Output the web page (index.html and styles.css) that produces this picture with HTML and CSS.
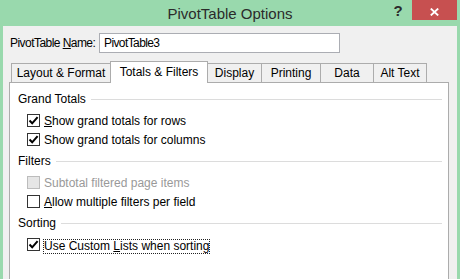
FILE: index.html
```html
<!DOCTYPE html>
<html>
<head>
<meta charset="utf-8">
<title>PivotTable Options</title>
<link rel="stylesheet" href="styles.css">
</head>
<body>
<div class="window">
  <div class="titlebar">
    <div class="spacer"></div>
    <div class="title">PivotTable Options</div>
    <div class="controls">
      <span class="help">?</span>
      <span class="close"><svg class="close-x" width="9" height="8" viewBox="0 0 9 8"><path d="M0.8 0.6 L8.2 7.4 M8.2 0.6 L0.8 7.4" stroke="#fff" stroke-width="1.9" fill="none"/></svg></span>
    </div>
  </div>
  <div class="content">
    <div class="name-row">
      <span class="name-label">PivotTable <u>N</u>ame:</span>
      <div class="name-input">PivotTable3</div>
    </div>
    <div class="tabs">
      <div class="tab tab-layout">Layout &amp; Format</div>
      <div class="tab tab-totals active">Totals &amp; Filters</div>
      <div class="tab tab-display">Display</div>
      <div class="tab tab-printing">Printing</div>
      <div class="tab tab-data">Data</div>
      <div class="tab tab-alt">Alt Text</div>
    </div>
    <div class="panel">
      <div class="group">
        <div class="group-head"><span class="group-title">Grand Totals</span><span class="rule"></span></div>
        <div class="check-row">
          <span class="box"><svg width="11" height="11" viewBox="0 0 11 11"><path d="M1.5 5.5 L4.2 8.3 L9.6 2.2" stroke="#000" stroke-width="2" fill="none"/></svg></span>
          <span class="lbl"><u>S</u>how grand totals for rows</span>
        </div>
        <div class="check-row">
          <span class="box"><svg width="11" height="11" viewBox="0 0 11 11"><path d="M1.5 5.5 L4.2 8.3 L9.6 2.2" stroke="#000" stroke-width="2" fill="none"/></svg></span>
          <span class="lbl">Show <u>g</u>rand totals for columns</span>
        </div>
      </div>
      <div class="group">
        <div class="group-head"><span class="group-title">Filters</span><span class="rule"></span></div>
        <div class="check-row disabled">
          <span class="box"></span>
          <span class="lbl">Subtotal filtered page items</span>
        </div>
        <div class="check-row">
          <span class="box"></span>
          <span class="lbl"><u>A</u>llow multiple filters per field</span>
        </div>
      </div>
      <div class="group">
        <div class="group-head"><span class="group-title">Sorting</span><span class="rule"></span></div>
        <div class="check-row">
          <span class="box"><svg width="11" height="11" viewBox="0 0 11 11"><path d="M1.5 5.5 L4.2 8.3 L9.6 2.2" stroke="#000" stroke-width="2" fill="none"/></svg></span>
          <span class="lbl focus">Use Custom <u>L</u>ists when sorting</span>
        </div>
      </div>
    </div>
  </div>
</div>
</body>
</html>
```

FILE: styles.css
```css
html, body {
  margin: 0;
  padding: 0;
}
body {
  font-family: "Liberation Sans", Arial, sans-serif;
  font-size: 12px;
  color: #000;
  background: #99d9ad;
}
.window {
  width: 460px;
  height: 279px;
  overflow: hidden;
  background: #99d9ad;
  padding: 0 3px;
  box-sizing: border-box;
  display: flex;
  flex-direction: column;
}
.titlebar {
  height: 26px;
  flex: none;
  display: grid;
  grid-template-columns: 1fr auto 1fr;
}
.title {
  font-size: 15px;
  line-height: 26px;
  padding-top: 1px;
  color: #2b2b2b;
  white-space: nowrap;
}
.controls {
  justify-self: end;
  align-self: start;
  display: flex;
  align-items: flex-start;
}
.help {
  width: 14px;
  margin-right: 7px;
  text-align: center;
  font-weight: bold;
  font-size: 15px;
  line-height: 22px;
  color: #2b2b2b;
}
.close {
  width: 45px;
  height: 20px;
  background: #c75050;
  display: flex;
  justify-content: center;
  align-items: flex-start;
}
.close-x {
  display: block;
  margin-top: 8px;
}
.content {
  flex: 1;
  background: #f0f0f0;
  padding: 7px 8px 0 6px;
  display: flex;
  flex-direction: column;
}
.name-row {
  display: flex;
  align-items: center;
  height: 20px;
  padding-left: 1px;
  margin-bottom: 8px;
}
.name-label {
  width: 89px;
  flex: none;
  white-space: nowrap;
  letter-spacing: -0.55px;
}
.name-input {
  width: 241px;
  height: 20px;
  box-sizing: border-box;
  border: 1px solid #abadb3;
  background: #fff;
  padding-left: 4px;
  line-height: 18px;
  letter-spacing: -0.6px;
}
.tabs {
  display: flex;
  align-items: flex-end;
  height: 21px;
  padding-left: 2px;
  flex: none;
}
.tab {
  height: 19px;
  box-sizing: border-box;
  border: 1px solid #acacac;
  border-bottom: 0;
  background: #f0f0f0;
  text-align: center;
  line-height: 18px;
  white-space: nowrap;
  margin-left: -1px;
}
.tab-layout { width: 100px; margin-left: 0; }
.tab-totals { width: 98px; }
.tab-display { width: 55px; }
.tab-printing { width: 60px; }
.tab-data { width: 54px; }
.tab-alt { width: 54px; }
.tab.active {
  height: 22px;
  margin-bottom: -1px;
  padding-top: 1px;
  background: #fff;
  position: relative;
  z-index: 1;
}
.panel {
  border: 1px solid #acacac;
  background: #fff;
  padding: 8px 0 0 8px;
  min-height: 240px;
  flex: none;
}
.group + .group {
  margin-top: 4px;
}
.group-head {
  height: 16px;
  display: flex;
  align-items: center;
  margin-bottom: 4px;
}
.group-title {
  line-height: 16px;
  white-space: nowrap;
}
.rule {
  flex: 1;
  height: 1px;
  background: #dcdcdc;
  margin: 0 6px 0 5px;
}
.check-row {
  height: 19px;
  display: flex;
  align-items: center;
  padding-left: 9px;
}
.box {
  width: 13px;
  height: 13px;
  box-sizing: border-box;
  border: 1px solid #333;
  background: #fff;
  flex: none;
}
.box svg {
  display: block;
}
.lbl {
  margin-left: 4px;
  white-space: nowrap;
}
.disabled .box {
  border-color: #bcbcbc;
  background: #e6e6e6;
}
.disabled .lbl {
  color: #999;
}
.lbl.focus {
  margin-left: 3px;
  margin-top: 4px;
  line-height: 13px;
  border: 1px dotted #222;
}
```
